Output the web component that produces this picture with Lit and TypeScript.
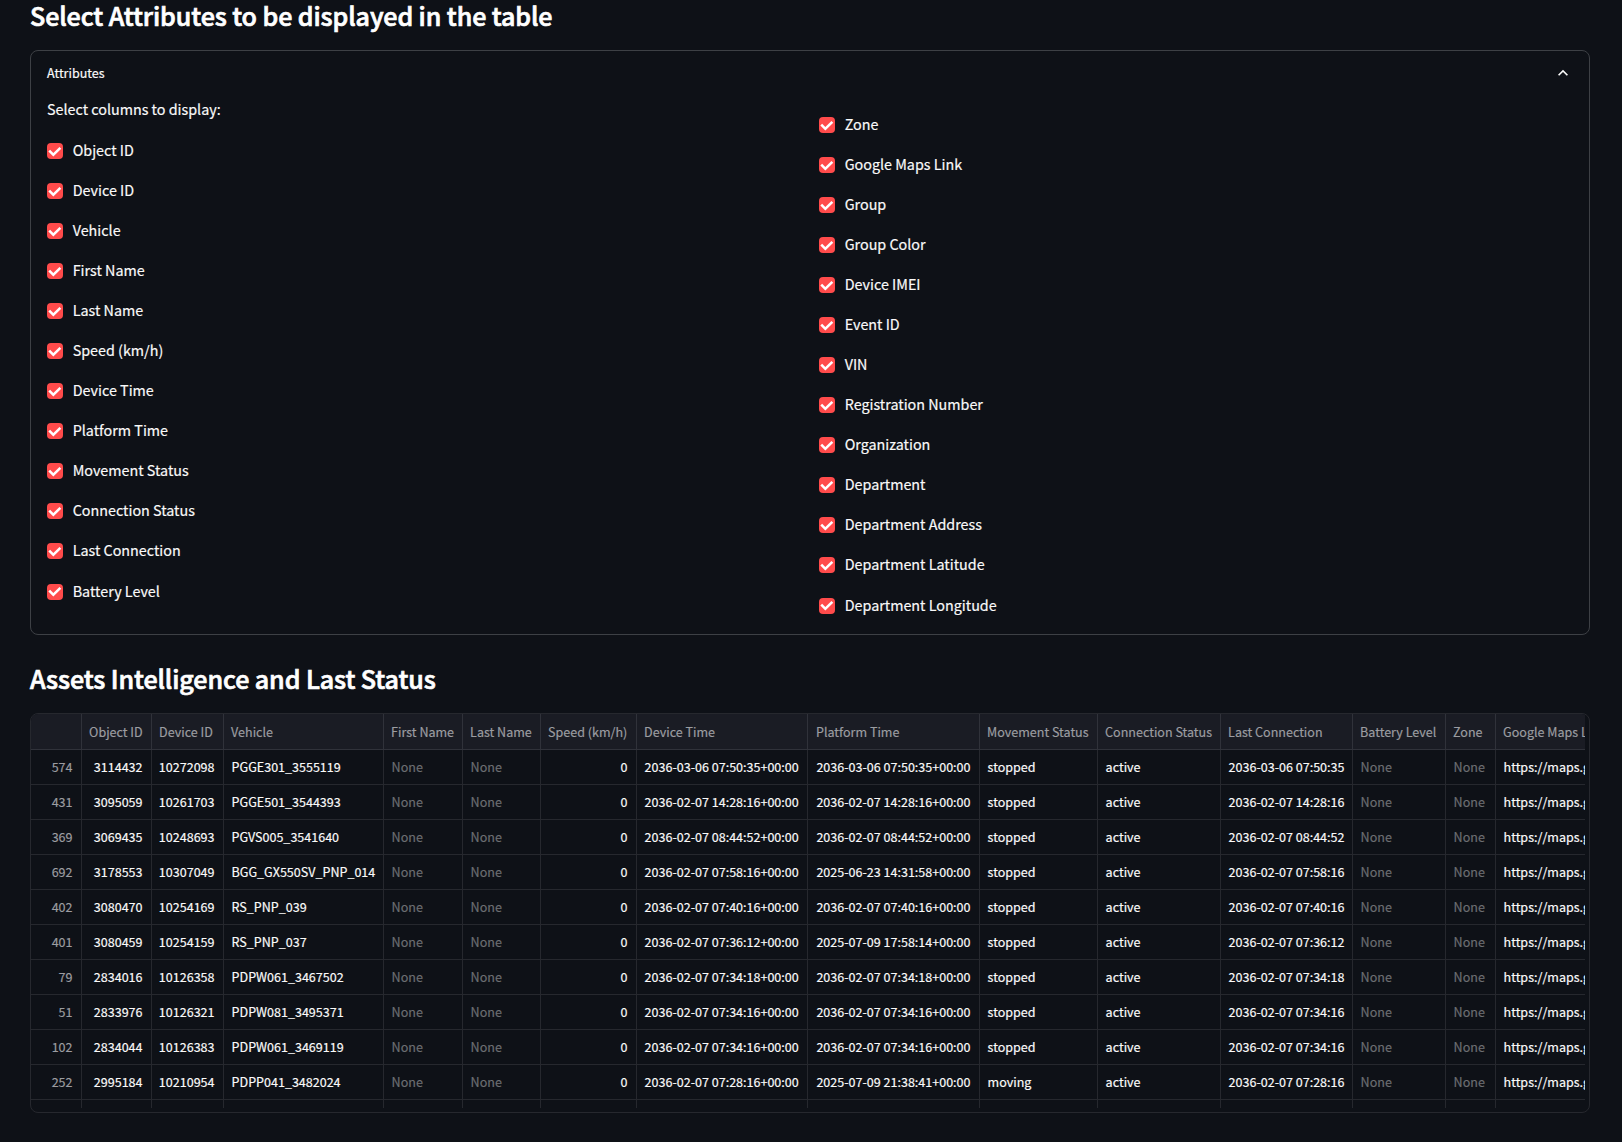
import { LitElement, html, css, nothing } from "lit";
import { customElement, property } from "lit/decorators.js";
import { classMap } from "lit/directives/class-map.js";

const LEFT = [
  "Object ID", "Device ID", "Vehicle", "First Name", "Last Name", "Speed (km/h)",
  "Device Time", "Platform Time", "Movement Status", "Connection Status",
  "Last Connection", "Battery Level",
];

const RIGHT = [
  "Zone", "Google Maps Link", "Group", "Group Color", "Device IMEI", "Event ID", "VIN",
  "Registration Number", "Organization", "Department", "Department Address",
  "Department Latitude", "Department Longitude",
];

interface Asset {
  index: string;
  object: string;
  device: string;
  vehicle: string;
  deviceTime: string;
  platformTime: string;
  movement: string;
}

const asset = (
  index: string, object: string, device: string, vehicle: string,
  deviceTime: string, platformTime = deviceTime, movement = "stopped",
): Asset => ({ index, object, device, vehicle, deviceTime, platformTime, movement });

const ASSETS: Asset[] = [
  asset("574", "3114432", "10272098", "PGGE301_3555119", "2036-03-06 07:50:35"),
  asset("431", "3095059", "10261703", "PGGE501_3544393", "2036-02-07 14:28:16"),
  asset("369", "3069435", "10248693", "PGVS005_3541640", "2036-02-07 08:44:52"),
  asset("692", "3178553", "10307049", "BGG_GX550SV_PNP_014", "2036-02-07 07:58:16", "2025-06-23 14:31:58"),
  asset("402", "3080470", "10254169", "RS_PNP_039", "2036-02-07 07:40:16"),
  asset("401", "3080459", "10254159", "RS_PNP_037", "2036-02-07 07:36:12", "2025-07-09 17:58:14"),
  asset("79", "2834016", "10126358", "PDPW061_3467502", "2036-02-07 07:34:18"),
  asset("51", "2833976", "10126321", "PDPW081_3495371", "2036-02-07 07:34:16"),
  asset("102", "2834044", "10126383", "PDPW061_3469119", "2036-02-07 07:34:16"),
  asset("252", "2995184", "10210954", "PDPP041_3482024", "2036-02-07 07:28:16", "2025-07-09 21:38:41", "moving"),
];

interface Column {
  title: string;
  value: (a: Asset) => string | null;
  numeric?: boolean;
  index?: boolean;
  inset?: boolean;
}

const COLUMNS: Column[] = [
  { title: "", value: (a) => a.index, numeric: true, index: true },
  { title: "Object ID", value: (a) => a.object, numeric: true },
  { title: "Device ID", value: (a) => a.device, numeric: true },
  { title: "Vehicle", value: (a) => a.vehicle },
  { title: "First Name", value: () => null },
  { title: "Last Name", value: () => null },
  { title: "Speed (km/h)", value: () => "0", numeric: true },
  { title: "Device Time", value: (a) => `${a.deviceTime}+00:00` },
  { title: "Platform Time", value: (a) => `${a.platformTime}+00:00`, inset: true },
  { title: "Movement Status", value: (a) => a.movement },
  { title: "Connection Status", value: () => "active" },
  { title: "Last Connection", value: (a) => a.deviceTime },
  { title: "Battery Level", value: () => null },
  { title: "Zone", value: () => null },
  { title: "Google Maps Link", value: () => "https://maps.google.com" },
];

@customElement("check-item")
class CheckItem extends LitElement {
  @property() label = "";

  static styles = css`
    :host { display: flex; align-items: center; gap: 9.7px; height: 24px; }
    .box {
      display: flex; align-items: center; justify-content: center;
      width: 16px; height: 16px; border-radius: 4px; background: #ff4b4b; flex: none;
    }
    .mark { width: 14px; height: 11px; display: block; }
    .text { line-height: 24px; margin-top: -2px; white-space: nowrap; }
  `;

  render() {
    return html`
      <span class="box" role="checkbox" aria-checked="true">
        <svg class="mark" viewBox="0 0 17 13" fill="#fff">
          <path d="M6.5 12.6L.4 6.6 2.6 4.4 6.5 8.4 13.9.9 16.1 3.1z" />
        </svg>
      </span>
      <span class="text">${this.label}</span>
    `;
  }
}

@customElement("asset-grid")
class AssetGrid extends LitElement {
  static styles = css`
    :host {
      display: block; box-sizing: border-box; height: 400px;
      border: 1px solid #26282e; border-radius: 8px; overflow: hidden;
      padding: 0 4px 4px 0; font-size: 12.54px;
    }
    .viewport { height: 100%; overflow: hidden; }
    .row {
      display: grid; height: 35px;
      grid-template-columns: 51px 70px 72px 160px 79px 78px 96px 171px 172px 118px 123px 132px 93px 50px 160px;
    }
    .head { height: 36px; background: #1a1c24; color: #9c9da1; }
    .cell {
      box-sizing: border-box; min-width: 0; padding: 0 0 0 7.6px;
      border-right: 1px solid #26282e; border-bottom: 1px solid #26282e;
      line-height: 34px; white-space: nowrap; overflow: hidden;
    }
    .head .cell { line-height: 35px; padding-left: 7.1px; border-color: #30323a; }
    .row .inset { padding-left: 8.4px; }
    .head .inset { padding-left: 8px; }
    .num { text-align: right; padding: 0 8.5px 0 0; }
    .index { color: #9c9da1; }
    .none { color: #6c6e72; }
  `;

  private cell(c: Column, a: Asset) {
    const v = c.value(a);
    const cls = {
      cell: true, num: !!c.numeric, index: !!c.index, none: v === null, inset: !!c.inset,
    };
    return html`<div class=${classMap(cls)}>${v ?? "None"}</div>`;
  }

  render() {
    return html`
      <div class="viewport">
        <div class="row head">
          ${COLUMNS.map((c) => html`
            <div class=${classMap({ cell: true, inset: !!c.inset })}>${c.title || nothing}</div>
          `)}
        </div>
        ${ASSETS.map((a) => html`<div class="row">${COLUMNS.map((c) => this.cell(c, a))}</div>`)}
        <div class="row">${COLUMNS.map(() => html`<div class="cell"></div>`)}</div>
      </div>
    `;
  }
}

@customElement("app-root")
class AppRoot extends LitElement {
  static styles = css`
    :host {
      display: block; box-sizing: border-box; height: 1142px; overflow: hidden;
      padding: 0 32px 0 30px; background: #0e1117; color: #fafafa;
      font-family: "Noto Sans CJK SC", "Open Sans", sans-serif; font-size: 14.33px;
      -webkit-text-stroke: 0.18px currentColor;
    }
    .title {
      margin: 0; height: 30px; line-height: 30px; font-size: 25.07px; font-weight: 500;
      letter-spacing: -0.095px; white-space: nowrap; color: #fff;
      -webkit-text-stroke: 0.7px #fff;
    }
    .panel {
      box-sizing: border-box; height: 585px; margin: 20px 0 28px;
      border: 1px solid #3d4045; border-radius: 8px; padding: 0 16px;
    }
    .summary { display: flex; justify-content: space-between; align-items: center; height: 44px; }
    .caption { font-size: 12.54px; line-height: 20px; }
    .chevron { width: 20px; height: 20px; display: block; }
    .columns { display: grid; grid-template-columns: 756px 756px; gap: 16px; }
    .list { display: flex; flex-direction: column; gap: 16.04px; }
    .lead { line-height: 24px; height: 24px; margin-bottom: 2px; }
    .left { padding-top: 2.15px; }
    .right { padding-top: 18.15px; }
    .assets { margin-bottom: 20px; }
  `;

  render() {
    return html`
      <h2 class="title">Select Attributes to be displayed in the table</h2>
      <section class="panel">
        <div class="summary">
          <span class="caption">Attributes</span>
          <svg class="chevron" viewBox="0 0 24 24" fill="#fafafa">
            <path d="M12 8l-6 6 1.41 1.41L12 10.83l4.59 4.58L18 14z" />
          </svg>
        </div>
        <div class="columns">
          <div class="list left">
            <div class="lead">Select columns to display:</div>
            ${LEFT.map((l) => html`<check-item .label=${l}></check-item>`)}
          </div>
          <div class="list right">
            ${RIGHT.map((l) => html`<check-item .label=${l}></check-item>`)}
          </div>
        </div>
      </section>
      <h2 class="title assets">Assets Intelligence and Last Status</h2>
      <asset-grid></asset-grid>
    `;
  }
}
